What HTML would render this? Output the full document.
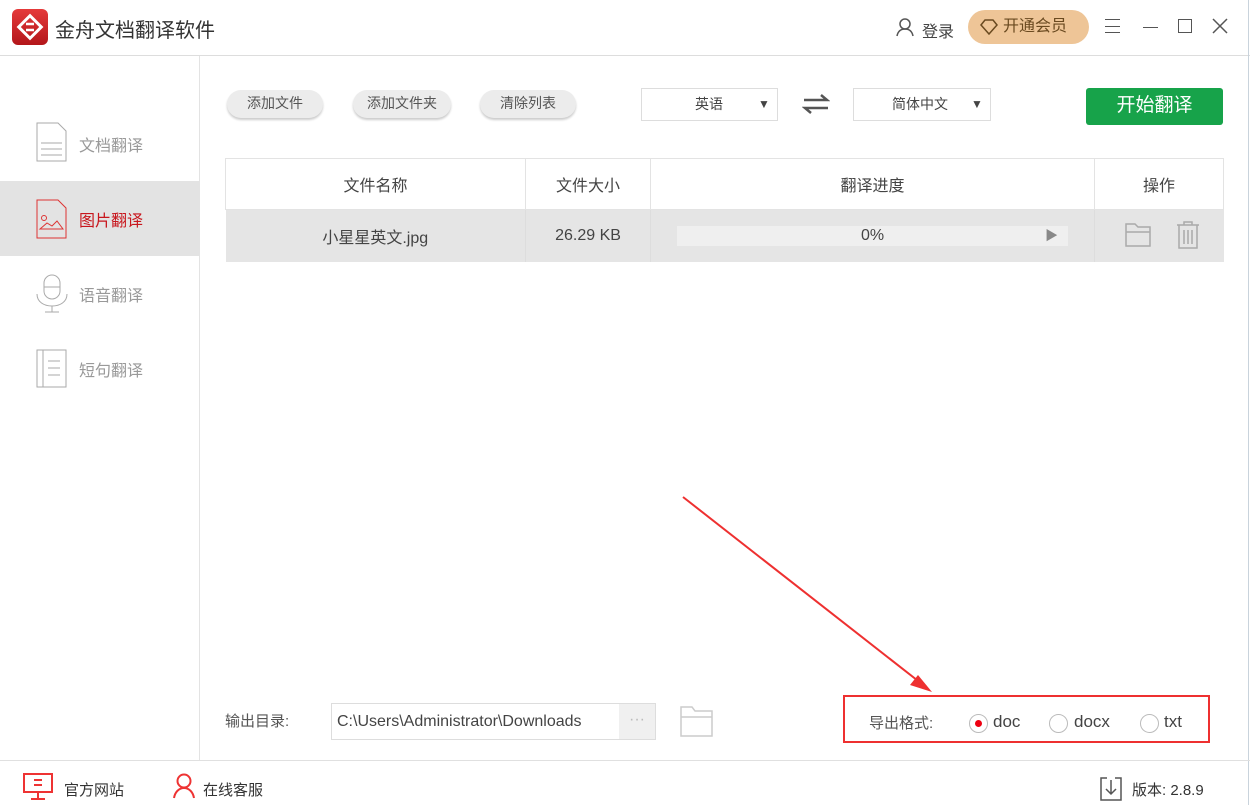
<!DOCTYPE html><html><head><meta charset="utf-8"><style>
*{margin:0;padding:0;box-sizing:border-box}
body{width:1250px;height:805px;background:#fff;font-family:"Liberation Sans","Noto Sans CJK SC",sans-serif;position:relative;overflow:hidden;color:#333}
.a{position:absolute}
.btn{position:absolute;top:90px;height:28px;border-radius:14px;background:#ececec;box-shadow:0 2px 2px #ccc;font-size:14px;color:#555;text-align:center;line-height:26px}
.sel{position:absolute;top:88px;height:33px;border:1px solid #ddd;font-size:14px;color:#444;line-height:31px}
.nav{position:absolute;left:0;width:199px;height:75px;font-size:16px;color:#999}
.nav span{position:absolute;left:79px;top:26px}
th,td{font-weight:normal;font-size:16px;color:#444;text-align:center}
</style></head><body>
<div class="a" style="left:0;top:55px;width:1250px;height:1px;background:#ddd"></div>
<div class="a" style="left:1248px;top:0;width:1px;height:805px;background:#c9d3dc"></div>
<div class="a" style="left:12px;top:9px;width:36px;height:36px;border-radius:6px;background:linear-gradient(#e53a3a,#b3161a)"></div>
<svg class="a" style="left:12px;top:9px" width="36" height="36"><rect x="10" y="10" width="16" height="16" transform="rotate(45 18 18)" fill="none" stroke="#fff" stroke-width="3"/><path d="M14 15h8M14 21h8" stroke="#fff" stroke-width="2.5"/></svg>
<div class="a" style="left:55px;top:14px;font-size:20px;color:#333">金舟文档翻译软件</div>
<svg class="a" style="left:895px;top:17px" width="20" height="20"><circle cx="10" cy="7" r="5" fill="none" stroke="#555" stroke-width="1.5"/><path d="M2 19c1-5 4-7 8-7s7 2 8 7" fill="none" stroke="#555" stroke-width="1.5"/></svg>
<div class="a" style="left:922px;top:18px;font-size:16px;color:#444">登录</div>
<div class="a" style="left:968px;top:10px;width:121px;height:34px;border-radius:17px;background:#eec597;font-size:16px;color:#6a4a20;line-height:33px;padding-left:35px">开通会员</div>
<svg class="a" style="left:979px;top:18px" width="20" height="18"><path d="M2 7l4-5h8l4 5-8 9z" fill="none" stroke="#6a4a20" stroke-width="1.5"/></svg>
<div class="a" style="left:1105px;top:19px;width:15px;height:14px;border-top:1px solid #555;border-bottom:1px solid #555"><div style="margin-top:6px;height:1px;background:#555"></div></div>
<div class="a" style="left:1143px;top:27px;width:15px;height:1px;background:#555"></div>
<div class="a" style="left:1178px;top:19px;width:14px;height:14px;border:1.5px solid #555"></div>
<svg class="a" style="left:1212px;top:18px" width="16" height="16"><path d="M1 1l14 14M15 1L1 15" stroke="#555" stroke-width="1.5"/></svg>
<div class="a" style="left:199px;top:56px;width:1px;height:704px;background:#e3e3e3"></div>
<div class="nav" style="top:106px"><svg class="a" style="left:36px;top:16px" width="32" height="40"><path d="M1 1h21l8 8v30H1z" fill="none" stroke="#aaa"/><path d="M5 21h21M5 27h21M5 33h21" stroke="#aaa"/></svg><span>文档翻译</span></div>
<div class="nav" style="top:181px;background:#e3e3e3;color:#c8161d"><svg class="a" style="left:36px;top:18px" width="32" height="40"><path d="M1 1h21l8 8v30H1z" fill="none" stroke="#d33"/><circle cx="8" cy="19" r="2.5" fill="none" stroke="#d33"/><path d="M4 30l7-6 5 3 5-5 6 8z" fill="none" stroke="#d33"/></svg><span>图片翻译</span></div>
<div class="nav" style="top:256px"><svg class="a" style="left:36px;top:18px" width="32" height="40"><rect x="8" y="1" width="16" height="24" rx="8" fill="none" stroke="#aaa"/><path d="M1 20c0 8 7 12 15 12s15-4 15-12M16 32v6M9 38h14M8 13h16" fill="none" stroke="#aaa"/></svg><span>语音翻译</span></div>
<div class="nav" style="top:331px"><svg class="a" style="left:36px;top:18px" width="32" height="40"><rect x="1" y="1" width="29" height="37" fill="none" stroke="#aaa"/><path d="M7 1v37M12 12h12M12 19h12M12 26h12" stroke="#aaa"/></svg><span>短句翻译</span></div>
<div class="btn" style="left:227px;width:96px">添加文件</div>
<div class="btn" style="left:353px;width:98px">添加文件夹</div>
<div class="btn" style="left:480px;width:96px">清除列表</div>
<div class="sel" style="left:641px;width:137px"><span style="position:absolute;left:53px">英语</span><span style="position:absolute;left:116px;font-size:12px">▼</span></div>
<svg class="a" style="left:802px;top:93px" width="28" height="22"><path d="M2 7h23l-6-5M26 15H3l6 5" fill="none" stroke="#555" stroke-width="2.5"/></svg>
<div class="sel" style="left:853px;width:138px"><span style="position:absolute;left:38px">简体中文</span><span style="position:absolute;left:117px;font-size:12px">▼</span></div>
<div class="a" style="left:1086px;top:88px;width:137px;height:37px;background:#17a34a;border-radius:3px;color:#fff;font-size:19px;text-align:center;line-height:36px">开始翻译</div>
<table class="a" style="left:225px;top:158px;width:999px;border-collapse:collapse">
<tr style="height:51px"><th style="width:300px;border:1px solid #e3e3e3">文件名称</th><th style="width:125px;border:1px solid #e3e3e3">文件大小</th><th style="width:444px;border:1px solid #e3e3e3">翻译进度</th><th style="border:1px solid #e3e3e3">操作</th></tr>
<tr style="height:52px;background:#e5e5e5"><td style="border-right:1px solid #ddd">小星星英文.jpg</td><td style="border-right:1px solid #ddd">26.29 KB</td><td style="border-right:1px solid #ddd"><div style="margin:0 26px;height:20px;background:#efefef;position:relative;line-height:19px">0%<span style="position:absolute;right:10px;color:#888;font-size:13px">▶</span></div></td><td></td></tr></table>
<svg class="a" style="left:1125px;top:222px" width="28" height="26"><path d="M1 2h9l3 3h12v19H1zM1 10h24" fill="none" stroke="#aaa" stroke-width="1.5"/></svg>
<svg class="a" style="left:1176px;top:221px" width="24" height="28"><path d="M1 4h22M8 4V1h8v3M3 4v23h18V4M8 9v14M12 9v14M16 9v14" fill="none" stroke="#aaa" stroke-width="1.5"/></svg>
<svg class="a" style="left:0;top:0" width="1250" height="805"><path d="M683 497L922 684" stroke="#ee3030" stroke-width="2"/><path d="M932 692l-22-7 8-10z" fill="#ee3030"/></svg>
<div class="a" style="left:225px;top:710px;font-size:15px;color:#555">输出目录:</div>
<div class="a" style="left:331px;top:703px;width:325px;height:37px;border:1px solid #ddd;font-size:16px;color:#444;line-height:35px;padding-left:5px;overflow:hidden;white-space:nowrap"><span style="display:inline-block;width:276px;overflow:hidden;vertical-align:top">C:\Users\Administrator\Downloads</span></div>
<div class="a" style="left:619px;top:704px;width:36px;height:35px;background:#f0f0f0;color:#bbb;text-align:center;line-height:32px">···</div>
<svg class="a" style="left:680px;top:705px" width="34" height="32"><path d="M1 2h11l3 4h17v25H1zM1 12h31" fill="none" stroke="#ccc" stroke-width="1.5"/></svg>
<div class="a" style="left:843px;top:695px;width:367px;height:48px;border:2px solid #ee3030"></div>
<div class="a" style="left:869px;top:712px;font-size:15px;color:#555">导出格式:</div>
<div class="a" style="left:969px;top:714px;width:19px;height:19px;border:1px solid #bbb;border-radius:50%"><div style="margin:5px;width:7px;height:7px;background:#e01;border-radius:50%"></div></div>
<div class="a" style="left:993px;top:712px;font-size:17px;color:#444">doc</div>
<div class="a" style="left:1049px;top:714px;width:19px;height:19px;border:1px solid #bbb;border-radius:50%"></div>
<div class="a" style="left:1074px;top:712px;font-size:17px;color:#444">docx</div>
<div class="a" style="left:1140px;top:714px;width:19px;height:19px;border:1px solid #bbb;border-radius:50%"></div>
<div class="a" style="left:1164px;top:712px;font-size:17px;color:#444">txt</div>
<div class="a" style="left:0;top:760px;width:1250px;height:1px;background:#e0e0e0"></div>
<svg class="a" style="left:23px;top:773px" width="32" height="28"><rect x="1" y="1" width="28" height="18" fill="none" stroke="#e33" stroke-width="2"/><path d="M11 7h8M11 12h8M15 19v6M8 26h14" stroke="#e33" stroke-width="2"/></svg>
<div class="a" style="left:64px;top:779px;font-size:15px;color:#333">官方网站</div>
<svg class="a" style="left:172px;top:773px" width="24" height="26"><circle cx="12" cy="8" r="6.5" fill="none" stroke="#e33" stroke-width="2"/><path d="M2 25c1-6 5-10 10-10s9 4 10 10" fill="none" stroke="#e33" stroke-width="2"/></svg>
<div class="a" style="left:203px;top:779px;font-size:15px;color:#333">在线客服</div>
<svg class="a" style="left:1100px;top:777px" width="22" height="24"><path d="M7 1H1v22h20V1h-6M11 3v14M6 12l5 5 5-5" fill="none" stroke="#555" stroke-width="1.5"/></svg>
<div class="a" style="left:1132px;top:779px;font-size:15px;color:#333">版本: 2.8.9</div>
</body></html>
